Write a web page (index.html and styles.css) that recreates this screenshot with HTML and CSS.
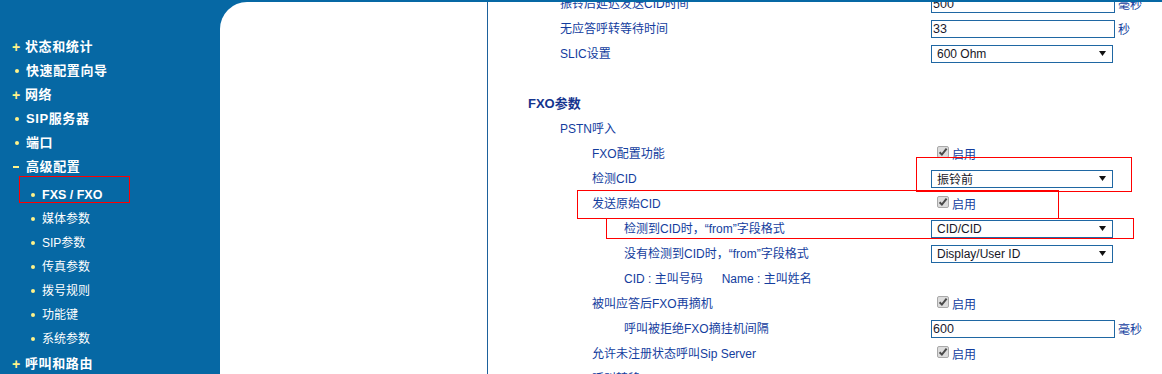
FILE: index.html
```html
<!DOCTYPE html>
<html lang="zh-CN">
<head>
<meta charset="utf-8">
<title>FXS / FXO</title>
<link rel="stylesheet" href="styles.css">
</head>
<body>
<div class="page">
  <aside class="sidebar">
    <ul class="nav">
      <li class="nav-item"><span class="mk mk-plus">+</span>状态和统计</li>
      <li class="nav-item"><span class="mk"><i class="dot"></i></span>快速配置向导</li>
      <li class="nav-item"><span class="mk mk-plus">+</span>网络</li>
      <li class="nav-item"><span class="mk"><i class="dot"></i></span>SIP服务器</li>
      <li class="nav-item"><span class="mk"><i class="dot"></i></span>端口</li>
      <li class="nav-item"><span class="mk"><i class="minus"></i></span>高级配置</li>
    </ul>
    <ul class="subnav">
      <li class="sub-item active"><i class="dot"></i>FXS / FXO</li>
      <li class="sub-item"><i class="dot"></i>媒体参数</li>
      <li class="sub-item"><i class="dot"></i>SIP参数</li>
      <li class="sub-item"><i class="dot"></i>传真参数</li>
      <li class="sub-item"><i class="dot"></i>拨号规则</li>
      <li class="sub-item"><i class="dot"></i>功能键</li>
      <li class="sub-item"><i class="dot"></i>系统参数</li>
    </ul>
    <ul class="nav">
      <li class="nav-item"><span class="mk mk-plus">+</span>呼叫和路由</li>
    </ul>
  </aside>

  <main class="panel">
    <div class="gutter"></div>
    <div class="content">
      <div class="rows">
        <div class="row"><div class="label l1">振铃后延迟发送CID时间</div><input class="text-input" value="500" readonly><span class="unit">毫秒</span></div>
        <div class="row"><div class="label l1">无应答呼转等待时间</div><input class="text-input" value="33" readonly><span class="unit">秒</span></div>
        <div class="row"><div class="label l1">SLIC设置</div><div class="select"><span>600 Ohm</span><svg class="arrow" width="7" height="5" viewBox="0 0 7 5"><path d="M0 0H7L3.5 5Z"/></svg></div></div>
        <div class="row"></div>
        <div class="row"><div class="label l0 heading">FXO参数</div></div>
        <div class="row"><div class="label l1">PSTN呼入</div></div>
        <div class="row"><div class="label l2">FXO配置功能</div><span class="check"><svg width="12" height="12" viewBox="0 0 12 12"><rect x="0.5" y="0.5" width="11" height="11" rx="1.5" fill="#dcdcdc" stroke="#a9a9a9"/><path d="M2.6 6.2L4.9 8.6L9.6 2.6" fill="none" stroke="#4a4a4a" stroke-width="2"/></svg><span class="check-text">启用</span></span></div>
        <div class="row"><div class="label l2">检测CID</div><div class="select"><span>振铃前</span><svg class="arrow" width="7" height="5" viewBox="0 0 7 5"><path d="M0 0H7L3.5 5Z"/></svg></div></div>
        <div class="row"><div class="label l2">发送原始CID</div><span class="check"><svg width="12" height="12" viewBox="0 0 12 12"><rect x="0.5" y="0.5" width="11" height="11" rx="1.5" fill="#dcdcdc" stroke="#a9a9a9"/><path d="M2.6 6.2L4.9 8.6L9.6 2.6" fill="none" stroke="#4a4a4a" stroke-width="2"/></svg><span class="check-text">启用</span></span></div>
        <div class="row"><div class="label l3">检测到CID时，“from”字段格式</div><div class="select"><span>CID/CID</span><svg class="arrow" width="7" height="5" viewBox="0 0 7 5"><path d="M0 0H7L3.5 5Z"/></svg></div></div>
        <div class="row"><div class="label l3">没有检测到CID时，“from”字段格式</div><div class="select"><span>Display/User ID</span><svg class="arrow" width="7" height="5" viewBox="0 0 7 5"><path d="M0 0H7L3.5 5Z"/></svg></div></div>
        <div class="row"><div class="label l3">CID : 主叫号码<span class="gap">Name : 主叫姓名</span></div></div>
        <div class="row"><div class="label l2">被叫应答后FXO再摘机</div><span class="check"><svg width="12" height="12" viewBox="0 0 12 12"><rect x="0.5" y="0.5" width="11" height="11" rx="1.5" fill="#dcdcdc" stroke="#a9a9a9"/><path d="M2.6 6.2L4.9 8.6L9.6 2.6" fill="none" stroke="#4a4a4a" stroke-width="2"/></svg><span class="check-text">启用</span></span></div>
        <div class="row"><div class="label l3">呼叫被拒绝FXO摘挂机间隔</div><input class="text-input" value="600" readonly><span class="unit">毫秒</span></div>
        <div class="row"><div class="label l2">允许未注册状态呼叫Sip Server</div><span class="check"><svg width="12" height="12" viewBox="0 0 12 12"><rect x="0.5" y="0.5" width="11" height="11" rx="1.5" fill="#dcdcdc" stroke="#a9a9a9"/><path d="M2.6 6.2L4.9 8.6L9.6 2.6" fill="none" stroke="#4a4a4a" stroke-width="2"/></svg><span class="check-text">启用</span></span></div>
        <div class="row"><div class="label l2">呼叫转移</div></div>
      </div>
    </div>
  </main>

  <div class="annot annot-nav"></div>
  <div class="annot annot-detect"></div>
  <div class="annot annot-send"></div>
  <div class="annot annot-from"></div>
</div>
</body>
</html>
```

FILE: styles.css
```css
html, body {
  margin: 0;
  padding: 0;
}
body {
  background: #0668a4;
  font-family: "Liberation Sans", "Noto Sans CJK SC", sans-serif;
  overflow: hidden;
}
.page {
  position: relative;
  display: flex;
  width: 1162px;
  height: 374px;
  overflow: hidden;
}

/* ---------- sidebar ---------- */
.sidebar {
  width: 220px;
  flex: none;
  padding-top: 35px;
  color: #fff;
}
.nav, .subnav {
  list-style: none;
  margin: 0;
  padding: 0;
}
.nav-item {
  display: flex;
  align-items: center;
  height: 24px;
  line-height: 24px;
  padding-left: 13px;
  font-size: 13px;
  font-weight: bold;
  letter-spacing: 0.6px;
  white-space: nowrap;
}
.mk {
  width: 13px;
  flex: none;
  display: flex;
  align-items: center;
  justify-content: flex-start;
  color: #fff38a;
}
.mk-plus {
  font-size: 14px;
  font-weight: bold;
  letter-spacing: 0;
  margin-left: -1px;
}
.mk .dot {
  margin-left: 2px;
}
.dot {
  display: inline-block;
  width: 4px;
  height: 4px;
  border-radius: 50%;
  background: #fff38a;
}
.minus {
  display: inline-block;
  width: 6px;
  height: 2px;
  background: #fff38a;
}
.subnav {
  padding-top: 4px;
  padding-bottom: 1px;
}
.sub-item {
  display: flex;
  align-items: center;
  height: 24px;
  line-height: 24px;
  padding-left: 31px;
  font-size: 12px;
  white-space: nowrap;
}
.sub-item .dot {
  margin-right: 7px;
}
.sub-item.active {
  font-weight: bold;
  font-size: 12.5px;
}

/* ---------- main panel ---------- */
.panel {
  flex: 1;
  display: flex;
  margin-top: 2px;
  background: #fff;
  border-top-left-radius: 27px;
  overflow: hidden;
}
.gutter {
  width: 267px;
  flex: none;
}
.content {
  flex: 1;
  border-left: 1px solid #1d619c;
  overflow: hidden;
}
.rows {
  margin-top: -11px;
}
.row {
  display: flex;
  align-items: center;
  height: 25px;
}
.label {
  width: 443px;
  flex: none;
  box-sizing: border-box;
  font-size: 12px;
  line-height: 16px;
  color: #133d9e;
  white-space: nowrap;
}
.l0 { padding-left: 40px; }
.l1 { padding-left: 72px; }
.l2 { padding-left: 104px; }
.l3 { padding-left: 136px; }
.heading {
  font-size: 13px;
  font-weight: bold;
  color: #15348e;
}
.gap {
  margin-left: 19px;
}

.text-input {
  width: 184px;
  height: 18px;
  box-sizing: border-box;
  margin: 0;
  padding: 0 1px;
  border: 1px solid #1f67a3;
  border-radius: 0;
  font-family: "Liberation Sans", "Noto Sans CJK SC", sans-serif;
  font-size: 12.5px;
  color: #1a1a2e;
  background: #fff;
  outline: none;
}
.unit {
  margin-left: 3px;
  font-size: 12px;
  color: #133d9e;
}
.select {
  width: 182px;
  height: 18px;
  box-sizing: border-box;
  display: flex;
  align-items: center;
  justify-content: space-between;
  padding: 0 6px 0 5px;
  border: 1px solid #1f67a3;
  font-size: 12px;
  color: #161626;
  background: #fff;
  white-space: nowrap;
}
.arrow {
  fill: #111;
  flex: none;
}
.check {
  display: flex;
  align-items: center;
  margin-left: 6px;
}
.check svg {
  flex: none;
  margin-top: -3px;
}
.check-text {
  margin-left: 3px;
  font-size: 12px;
  color: #133d9e;
}

/* ---------- red annotations ---------- */
.annot {
  position: absolute;
  box-sizing: border-box;
  border: 1px solid #ff0000;
  pointer-events: none;
}
.annot-nav { left: 19px; top: 176px; width: 111px; height: 27px; }
.annot-detect { left: 916px; top: 157px; width: 216px; height: 35px; }
.annot-send { left: 577px; top: 190px; width: 482px; height: 29px; }
.annot-from { left: 606px; top: 218px; width: 528px; height: 21px; }
```
